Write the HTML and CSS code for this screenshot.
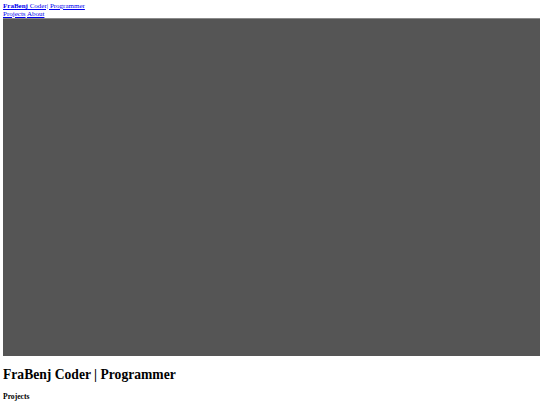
FILE: index.html
```html
<!DOCTYPE html>
<html>
<head>
<meta charset="utf-8">
<link rel="stylesheet" href="styles.css">
</head>
<body>
<header class="site-header">
  <div class="brand-line"><a href="#"><b>FraBenj</b> Coder| Programmer</a></div>
  <nav class="nav"><a href="#">Projects</a> <a href="#">About</a></nav>
</header>
<div class="hero"></div>
<h1 class="title">FraBenj Coder | Programmer</h1>
<h3 class="section">Projects</h3>
</body>
</html>
```
FILE: styles.css
```css
html { margin: 0; padding: 0; overflow: hidden; }
body {
  margin: 3px 0 0 3px;
  font-family: "Liberation Serif", "Times New Roman", serif;
  font-size: 7px;
  line-height: 7.5px;
  color: #000;
  background: #fff;
}
a { color: #0000ee; text-decoration: underline; }
.hero {
  height: 337px;
  background: #555555;
  border-top: 1px solid #8a8a8a;
}
.title {
  font-size: 13.6px;
  line-height: 16px;
  margin: 11px 0 9px;
  font-weight: bold;
}
.section {
  font-size: 7.6px;
  line-height: 9px;
  margin: 0;
  font-weight: bold;
}
```
